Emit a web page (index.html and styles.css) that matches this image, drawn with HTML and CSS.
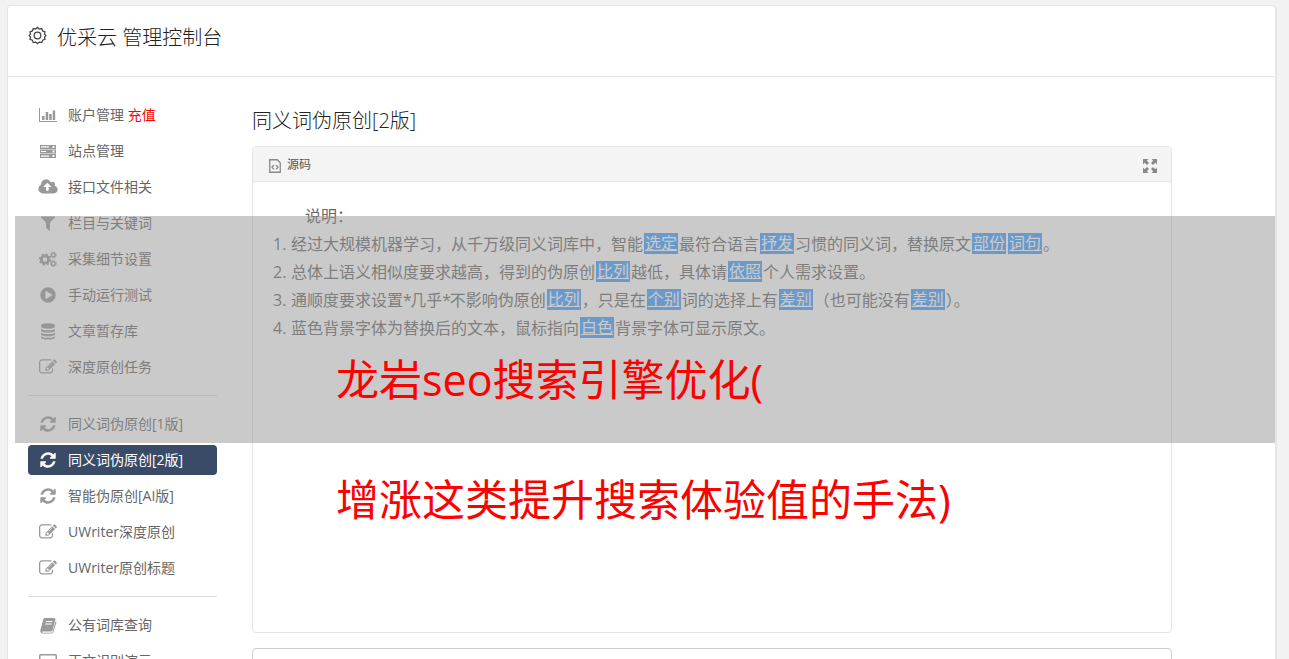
FILE: index.html
```
<!DOCTYPE html>
<html lang="zh-CN">
<head>
    <meta charset="UTF-8">
    <meta name="viewport" content="width=device-width, initial-scale=1.0">
    <title>优采云 管理控制台</title>
    <link rel="stylesheet" href="styles.css">
</head>
<body>
    <svg class="sprite" xmlns="http://www.w3.org/2000/svg">
        <symbol id="i-chart" viewBox="0 0 20 18"><path d="M1 2h1v13h17v1H1zM4 10h2.5v4H4zM7.7 6h2.5v8H7.7zM11.2 8h2.5v6h-2.500zM14.700 4.500h2.500V14h-2.500z"/></symbol>
        <symbol id="i-server" viewBox="0 0 20 18"><path fill-rule="evenodd" d="M2 3h16v4H2zM3 4.300v1.200h8V4.300zM14.500 4v2h2V4zM2 7.500h16v4H2zM3 8.900v1.200h5V8.900zM14.500 8.500v2h2v-2zM2 12h16v4H2zM3 13.500v1.200h8v-1.200zM14.500 13v2h2v-2z"/></symbol>
        <symbol id="i-cloud" viewBox="-64 0 1920 1792"><path d="M1216 864q0-14-9-23l-352-352q-9-9-23-9t-23 9l-351 351q-10 12-10 24 0 14 9 23t23 9h224v352q0 13 9.500 22.500t22.500 9.500h192q13 0 22.500-9.500t9.500-22.500v-352h224q13 0 22.500-9.500t9.500-22.500zm640 288q0 159-112.500 271.500t-271.500 112.500h-1088q-185 0-316.500-131.500t-131.500-316.500q0-130 70-240t188-165q-2-30-2-43 0-212 150-362t362-150q156 0 285.500 87t188.500 231q71-62 166-62 106 0 181 75t75 181q0 76-41 138 130 31 213.500 135.500t83.500 238.500z"/></symbol>
        <symbol id="i-filter" viewBox="0 0 1792 1792"><path d="M1595 295q17 41-14 70l-493 493v742q0 42-39 59-13 5-25 5-27 0-45-19l-256-256q-19-19-19-45v-486l-493-493q-31-29-14-70 17-39 59-39h1280q42 0 59 39z"/></symbol>
        <symbol id="i-cogs" viewBox="0 0 20 18"><g fill="none" stroke="currentColor"><circle cx="7" cy="9.500" r="3.600" stroke-width="2.800"/><circle cx="7" cy="9.500" r="5.300" stroke-width="1.700" stroke-dasharray="2.080"/><circle cx="15.300" cy="5" r="1.900" stroke-width="1.400"/><circle cx="15.300" cy="5" r="3" stroke-width="1" stroke-dasharray="1.178"/><circle cx="15.300" cy="13.500" r="1.900" stroke-width="1.400"/><circle cx="15.300" cy="13.500" r="3" stroke-width="1" stroke-dasharray="1.178"/></g></symbol>
        <symbol id="i-play" viewBox="0 0 1792 1792"><path d="M896 128q209 0 385.500 103t279.500 279.500 103 385.500-103 385.500-279.500 279.500-385.500 103-385.500-103-279.500-279.500-103-385.500 103-385.500 279.500-279.500 385.500-103zm384 823q32-18 32-55t-32-55l-544-320q-31-19-64-1-32 19-32 56v640q0 37 32 56 16 8 32 8 17 0 32-9z"/></symbol>
        <symbol id="i-database" viewBox="0 0 20 18"><path d="M3 3.500C3 .5 17 .5 17 3.500v1C17 7.500 3 7.500 3 4.500zM3 6.800c2 2 12 2 14 0v1.700c0 2.700-14 2.700-14 0zM3 10.600c2 2 12 2 14 0v1.700c0 2.700-14 2.700-14 0zM3 14.300c2 2 12 2 14 0v1.200c0 2.700-14 2.700-14 0z"/></symbol>
        <symbol id="i-edit" viewBox="0 0 1792 1792"><path d="M888 1184l116-116-152-152-116 116v56h96v96h56zm440-720q-16-16-33 1l-350 350q-17 17-1 33t33-1l350-350q17-17 1-33zm80 594v190q0 119-84.500 203.500t-203.500 84.500h-832q-119 0-203.500-84.500t-84.500-203.500v-832q0-119 84.500-203.500t203.500-84.500h832q63 0 117 25 15 7 18 23 3 17-9 29l-49 49q-14 14-32 8-23-6-45-6h-832q-66 0-113 47t-47 113v832q0 66 47 113t113 47h832q66 0 113-47t47-113v-126q0-13 9-22l64-64q15-15 35-7t20 29zm-96-738l288 288-672 672h-288v-288zm444 132l-92 92-288-288 92-92q28-28 68-28t68 28l152 152q28 28 28 68t-28 68z"/></symbol>
        <symbol id="i-refresh" viewBox="0 0 1792 1792"><path d="M1639 1056q0 5-1 7-64 268-268 434.500t-478 166.500q-146 0-282.500-55t-243.500-157l-129 129q-19 19-45 19t-45-19-19-45v-448q0-26 19-45t45-19h448q26 0 45 19t19 45-19 45l-137 137q71 66 161 102t187 36q134 0 250-65t186-179q11-17 53-117 8-23 30-23h192q13 0 22.500 9.500t9.500 22.500zm25-800v448q0 26-19 45t-45 19h-448q-26 0-45-19t-19-45 19-45l138-138q-148-137-349-137-134 0-250 65t-186 179q-11 17-53 117-8 23-30 23h-199q-13 0-22.500-9.500t-9.500-22.500v-7q65-268 270-434.500t480-166.500q146 0 284 55.500t245 156.500l130-129q19-19 45-19t45 19 19 45z"/></symbol>
        <symbol id="i-book" viewBox="0 0 20 18"><path fill-rule="evenodd" d="M7 2h9q1.800.2 1.400 1.800L14.600 14q-.4 1.500-2 1.500H4.800q-1-.1-.8.600.2.600 1 .6h8.500q.8 0 1-.8L17.800 5q.9.600.5 1.800l-2.800 9q-.5 1.700-2.200 1.700H4.800q-2.500-.2-2.600-2.500L5.200 3.500Q5.600 2 7 2zM8 5l-.3 1h6.600l.3-1zM7.300 7.500l-.3 1h6.600l.3-1z"/></symbol>
        <symbol id="i-laptop" viewBox="0 0 20 18"><path fill-rule="evenodd" d="M2.500 2h15q1.500 0 1.500 1.500v9q0 1.500-1.500 1.500h-15Q1 14 1 12.500v-9Q1 2 2.500 2zM2.500 3.500v9h15v-9zM0 15h20v1.500H0z"/></symbol>
    </svg>

    <div class="wrapper">
        <header class="header">
            <svg class="gear" viewBox="0 0 20 20"><path d="M10 1.500l1.900 1.700 2.600-.5.900 2.500 2.500.9-.5 2.400L18.800 10l-1.400 1.700.5 2.300-2.500.9-.9 2.500-2.600-.5L10 18.500l-1.900-1.600-2.600.5-.9-2.500-2.500-.9.500-2.300L1.200 10l1.400-1.500-.5-2.400 2.500-.9.900-2.500 2.600.5z"/><circle cx="10" cy="10" r="3.500"/></svg>
            <h1>优采云 管理控制台</h1>
        </header>

        <div class="main">
            <nav class="sidebar">
                <a href="#"><svg><use href="#i-chart"/></svg>账户管理 <span class="recharge">充值</span></a>
                <a href="#"><svg><use href="#i-server"/></svg>站点管理</a>
                <a href="#"><svg><use href="#i-cloud"/></svg>接口文件相关</a>
                <a href="#"><svg><use href="#i-filter"/></svg>栏目与关键词</a>
                <a href="#"><svg><use href="#i-cogs"/></svg>采集细节设置</a>
                <a href="#"><svg><use href="#i-play"/></svg>手动运行测试</a>
                <a href="#"><svg><use href="#i-database"/></svg>文章暂存库</a>
                <a href="#"><svg><use href="#i-edit"/></svg>深度原创任务</a>
                <hr>
                <a href="#"><svg><use href="#i-refresh"/></svg>同义词伪原创[1版]</a>
                <a href="#" class="active"><svg><use href="#i-refresh"/></svg>同义词伪原创[2版]</a>
                <a href="#"><svg><use href="#i-refresh"/></svg>智能伪原创[AI版]</a>
                <a href="#"><svg><use href="#i-edit"/></svg>UWriter深度原创</a>
                <a href="#"><svg><use href="#i-edit"/></svg>UWriter原创标题</a>
                <hr>
                <a href="#"><svg><use href="#i-book"/></svg>公有词库查询</a>
                <a href="#"><svg><use href="#i-laptop"/></svg>正文识别演示</a>
            </nav>

            <div class="content">
                <h2>同义词伪原创[2版]</h2>
                <div class="editor">
                    <div class="toolbar">
                        <svg class="source-icon" viewBox="0 0 12 14"><path d="M.75.750h7.500l3 3v9.500H.750zM5 6L3 8.200l2 2.200M7 6l2 2.200-2 2.200"/></svg>
                        <span>源码</span>
                        <svg class="expand-icon" viewBox="0 0 14 14"><path d="M0 0h5.500L3.800 1.700 6 4 4 6 1.700 3.800 0 5.500zM14 0v5.500l-1.700-1.700L10 6 8 4l2.200-2.300L8.500 0zM0 14V8.500l1.700 1.700L4 8l2 2-2.200 2.300L5.500 14zM14 14H8.500l1.700-1.700L8 10l2-2 2.300 2.200L14 8.500z"/></svg>
                    </div>
                    <div class="editor-body">
                        <p>说明：</p>
                        <ol>
                            <li><span>1.</span>经过大规模机器学习，从千万级同义词库中，智能<u>选定</u>最符合语言<u>抒发</u>习惯的同义词，替换原文<u>部份</u><u>词句</u>。</li>
                            <li><span>2.</span>总体上语义相似度要求越高，得到的伪原创<u>比列</u>越低，具体请<u>依照</u>个人需求设置。</li>
                            <li><span>3.</span>通顺度要求设置<b>*</b>几乎<b>*</b>不影响伪原创<u>比列</u>，只是在<u>个别</u>词的选择上有<u>差别</u>（也可能没有<u>差别</u>）。</li>
                            <li><span>4.</span>蓝色背景字体为替换后的文本，鼠标指向<u>白色</u>背景字体可显示原文。</li>
                        </ol>
                    </div>
                </div>
                <div class="result"></div>
            </div>
        </div>
    </div>

    <div class="banner"></div>
    <div class="caption">
        <div>龙岩seo搜索引擎优化(</div>
        <div>增涨这类提升搜索体验值的手法)</div>
    </div>
</body>
</html>
```
FILE: styles.css
```
/* Base styling */
* {
    box-sizing: border-box;
}

body {
    position: relative;
    margin: 0;
    padding: 5px 12px 0 7px;
    height: 659px;
    overflow: hidden;
    background-color: #f2f2f2;
    font-family: 'Open Sans', 'Noto Sans CJK SC', sans-serif;
    font-size: 14px;
    color: #666;
}

h1, h2 {
    margin: 0;
    font-size: 20px;
    line-height: 30px;
    font-weight: 300;
    color: #222;
}

svg {
    fill: currentColor;
}

.sprite {
    position: absolute;
    width: 0;
    height: 0;
}

.wrapper {
    height: 654px;
    overflow: hidden;
    background-color: #fff;
    border: 1px solid #e5e5e5;
    border-right-width: 2px;
    border-bottom: 0;
    border-radius: 4px 4px 0 0;
}

/* Header */
.header {
    display: flex;
    height: 71px;
    padding: 17px 20px 0;
    border-bottom: 1px solid #e5e5e5;
}

.gear {
    width: 19px;
    height: 19px;
    margin: 3px 10px 0 0;
    fill: none;
    stroke: #444;
    stroke-width: 1.3;
}

/* Sidebar */
.main {
    display: flex;
    padding: 23px 20px 0;
}

.sidebar {
    width: 189px;
    margin-right: 35px;
    flex-shrink: 0;
}

.sidebar a {
    display: flex;
    align-items: center;
    height: 30px;
    margin-bottom: 6px;
    padding: 0 0 2px 10px;
    border-radius: 4px;
    color: #666;
    text-decoration: none;
    white-space: pre;
}

.sidebar a svg {
    width: 20px;
    height: 18px;
    margin: 2px 10px 0 0;
    color: #999;
}

.sidebar a.active,
.sidebar a.active svg {
    color: #fff;
}

.sidebar a.active {
    background-color: #3a4b68;
}

.sidebar hr {
    height: 1px;
    margin: 13px 0;
    border: 0;
    background-color: #ddd;
}

.recharge {
    color: #f00;
}

/* Editor */
.content {
    width: 920px;
    padding-top: 6px;
}

.editor {
    height: 487px;
    margin-top: 10px;
    border: 1px solid #e5e5e5;
    border-radius: 4px;
}

.toolbar {
    display: flex;
    align-items: center;
    height: 35px;
    padding: 0 14px 0 16px;
    border-bottom: 1px solid #e5e5e5;
    background-color: #f4f4f4;
    font-size: 12px;
    color: #555;
}

.source-icon {
    width: 12px;
    height: 14px;
    margin: 4px 6px 0 0;
    fill: none;
    stroke: #888;
    stroke-width: 1.3;
}

.expand-icon {
    width: 14px;
    height: 14px;
    margin: 4px 0 0 auto;
    color: #888;
}

.editor-body {
    padding: 20px;
    font-size: 16px;
    line-height: 28px;
    white-space: nowrap;
}

.editor-body p {
    margin: 0;
    padding-left: 32px;
}

.editor-body ol {
    margin: 0;
    padding: 0;
    list-style: none;
}

.editor-body li {
    display: flex;
    align-items: center;
    height: 28px;
}

.editor-body li span {
    width: 18px;
}

.editor-body b {
    font-weight: normal;
    letter-spacing: -1.5px;
}

.editor-body u {
    height: 21px;
    margin: 0 1px 1px;
    padding: 0 1px;
    background-color: #409eff;
    color: #fff;
    line-height: 20px;
}

.result {
    height: 100px;
    margin-top: 15px;
    border: 1px solid #ccc;
    border-radius: 4px;
}

/* Translucent band and caption over the page */
.banner {
    position: absolute;
    left: 15px;
    top: 216px;
    width: 1260px;
    height: 227px;
    background-color: rgba(150, 150, 150, 0.5);
}

.caption {
    position: absolute;
    left: 336px;
    top: 320px;
    font-size: 43px;
    line-height: 120px;
    color: #f00;
    white-space: nowrap;
}
```
